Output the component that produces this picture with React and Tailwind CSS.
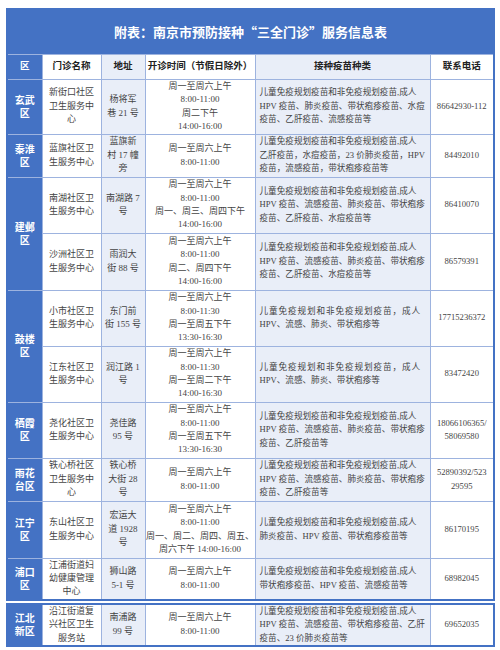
const rows = [
  {
    district: ["玄武", "区"],
    span: 1,
    h: 55,
    name: ["新街口社区", "卫生服务中", "心"],
    addr: ["杨将军", "巷 21 号"],
    hours: ["周一至周六上午", "8:00-11:00", "周二下午", "14:00-16:00"],
    vac: ["儿童免疫规划疫苗和非免疫规划疫苗,成人", "HPV 疫苗、肺炎疫苗、带状疱疹疫苗、水痘", "疫苗、乙肝疫苗、流感疫苗等"],
    phone: ["86642930-112"],
  },
  {
    district: ["秦淮", "区"],
    span: 1,
    h: 43,
    name: ["蓝旗社区卫", "生服务中心"],
    addr: ["蓝旗新", "村 17 幢", "旁"],
    hours: ["周一至周六上午", "8:00-11:00"],
    vac: ["儿童免疫规划疫苗和非免疫规划疫苗,成人", "乙肝疫苗，水痘疫苗，23 价肺炎疫苗，HPV", "疫苗，流感疫苗，带状疱疹疫苗等"],
    phone: ["84492010"],
  },
  {
    district: ["建邺", "区"],
    span: 2,
    h: 56,
    name: ["南湖社区卫", "生服务中心"],
    addr: ["南湖路 7", "号"],
    hours: ["周一至周六上午", "8:00-11:00", "周一、周三、周四下午", "14:00-16:00"],
    vac: ["儿童免疫规划疫苗和非免疫规划疫苗,成人", "HPV 疫苗、流感疫苗、肺炎疫苗、带状疱疹", "疫苗、乙肝疫苗、水痘疫苗等"],
    phone: ["86410070"],
  },
  {
    h: 57,
    name: ["沙洲社区卫", "生服务中心"],
    addr: ["雨润大", "街 88 号"],
    hours: ["周一至周六上午", "8:00-11:00", "周二、周四下午", "14:00-16:00"],
    vac: ["儿童免疫规划疫苗和非免疫规划疫苗,成人", "HPV 疫苗、流感疫苗、肺炎疫苗、带状疱疹", "疫苗、乙肝疫苗、水痘疫苗等"],
    phone: ["86579391"],
  },
  {
    district: ["鼓楼", "区"],
    span: 2,
    h: 56,
    name: ["小市社区卫", "生服务中心"],
    addr: ["东门前", "街 155 号"],
    hours: ["周一至周六上午", "8:00-11:30", "周一至周五下午", "13:30-16:30"],
    vac: ["儿童免疫规划和非免疫规划疫苗，成人", "HPV、流感、肺炎、带状疱疹等"],
    spaced: true,
    phone: ["17715236372"],
  },
  {
    h: 56,
    name: ["江东社区卫", "生服务中心"],
    addr: ["润江路 1", "号"],
    hours: ["周一至周六上午", "8:00-11:30", "周一至周二下午", "14:00-16:30"],
    vac: ["儿童免疫规划和非免疫规划疫苗，成人", "HPV、流感、肺炎、带状疱疹等"],
    spaced: true,
    phone: ["83472420"],
  },
  {
    district: ["栖霞", "区"],
    span: 1,
    h: 56,
    name: ["尧化社区卫", "生服务中心"],
    addr: ["尧佳路", "95 号"],
    hours: ["周一至周六上午", "8:00-11:00", "周一至周五下午", "13:30-16:30"],
    vac: ["儿童免疫规划疫苗和非免疫规划疫苗,成人", "HPV 疫苗、流感疫苗、肺炎疫苗、带状疱疹", "疫苗、乙肝疫苗等"],
    phone: ["18066106365/", "58069580"],
  },
  {
    district: ["雨花", "台区"],
    span: 1,
    h: 43,
    name: ["铁心桥社区", "卫生服务中", "心"],
    addr: ["铁心桥", "大街 28", "号"],
    hours: ["周一至周六上午", "8:00-11:00"],
    vac: ["儿童免疫规划疫苗和非免疫规划疫苗,成人", "HPV 疫苗、流感疫苗、肺炎疫苗、带状疱疹", "疫苗、乙肝疫苗等"],
    phone: ["52890392/523", "29595"],
  },
  {
    district: ["江宁", "区"],
    span: 1,
    h: 57,
    name: ["东山社区卫", "生服务中心"],
    addr: ["宏运大", "道 1928", "号"],
    hours: ["周一至周六上午", "8:00-11:00", "周一、周二、周四、周五、", "周六下午 14:00-16:00"],
    vac: ["儿童免疫规划疫苗和非免疫规划疫苗,成人", "肺炎疫苗、HPV 疫苗、带状疱疹疫苗等"],
    phone: ["86170195"],
  },
  {
    district: ["浦口", "区"],
    span: 1,
    h: 41,
    name: ["江浦街道妇", "幼健康管理", "中心"],
    addr: ["狮山路", "5-1 号"],
    hours: ["周一至周六上午", "8:00-11:00"],
    vac: ["儿童免疫规划疫苗和非免疫规划疫苗,成人", "带状疱疹疫苗、HPV 疫苗、流感疫苗等"],
    phone: ["68982045"],
  },
];

const lastRow = {
  district: ["江北", "新区"],
  span: 1,
  h: 42,
  name: ["沿江街道复", "兴社区卫生", "服务站"],
  addr: ["南浦路", "99 号"],
  hours: ["周一至周六上午", "8:00-11:00"],
  vac: ["儿童免疫规划疫苗和非免疫规划疫苗,成人", "HPV 疫苗、流感疫苗、带状疱疹疫苗、乙肝", "疫苗、23 价肺炎疫苗等"],
  phone: ["69652035"],
};

const font = { fontFamily: '"Liberation Serif", "Noto Sans CJK SC", serif' };
const cjk = { fontFamily: '"Noto Sans CJK SC", sans-serif' };

function Lines({ items, spaced }) {
  return items.map((t, i) => (
    <div key={i} className={"whitespace-nowrap " + (spaced && i === 0 ? "tracking-[0.9px]" : "")}>
      {t}
    </div>
  ));
}

function Cols() {
  return (
    <colgroup>
      <col className="w-[35px]" />
      <col className="w-[59px]" />
      <col className="w-[44px]" />
      <col className="w-[110px]" />
      <col className="w-[175px]" />
      <col className="w-[64px]" />
    </colgroup>
  );
}

const cell = "border border-[#9db3df] p-0 align-middle";

function Row({ r }) {
  return (
    <tr style={{ height: r.h }}>
      {r.district && (
        <td rowSpan={r.span} className={cell + " bg-[#4472c4] text-center text-[10px] font-bold leading-[13px] text-white"}>
          <Lines items={r.district} />
        </td>
      )}
      <td className={cell + " bg-white text-center"}>
        <Lines items={r.name} />
      </td>
      <td className={cell + " bg-[#e9eef8] text-center"}>
        <Lines items={r.addr} />
      </td>
      <td className={cell + " bg-white text-center"}>
        <Lines items={r.hours} />
      </td>
      <td className={cell + " bg-[#e9eef8] pl-[4px] text-left text-[8.6px]"}>
        <Lines items={r.vac} spaced={r.spaced} />
      </td>
      <td className={cell + " bg-white text-center text-[8.6px]"}>
        <Lines items={r.phone} />
      </td>
    </tr>
  );
}

export default function App() {
  return (
    <div className="h-[650px] w-[500px] overflow-hidden bg-white pl-[6px] pt-[8px] text-[9px] leading-[13.4px] text-[#444]" style={font}>
      <table className="w-[487px] table-fixed border-collapse border-2 border-[#4472c4]">
        <Cols />
        <tbody>
          <tr className="h-[45px]">
            <td colSpan={6} className="bg-[#4472c4] p-0 pt-[2px] text-center align-middle text-[13px] font-bold leading-[16px] text-white">
              附表：南京市预防接种<span style={cjk}>“</span>三全门诊<span style={cjk}>”</span>服务信息表
            </td>
          </tr>
          <tr className="h-[25px] text-[9.5px] font-bold text-[#222]">
            <td className={cell + " bg-[#4472c4] text-center text-white"}>区</td>
            <td className={cell + " bg-white text-center"}>门诊名称</td>
            <td className={cell + " bg-[#e9eef8] text-center"}>地址</td>
            <td className={cell + " bg-white text-center"}>开诊时间（节假日除外）</td>
            <td className={cell + " bg-[#e9eef8] text-center"}>接种疫苗种类</td>
            <td className={cell + " bg-white text-center"}>联系电话</td>
          </tr>
          {rows.map((r, i) => (
            <Row key={i} r={r} />
          ))}
        </tbody>
      </table>
      <table className="mt-[2px] w-[487px] table-fixed border-collapse border-2 border-[#4472c4]">
        <Cols />
        <tbody>
          <Row r={lastRow} />
        </tbody>
      </table>
    </div>
  );
}
